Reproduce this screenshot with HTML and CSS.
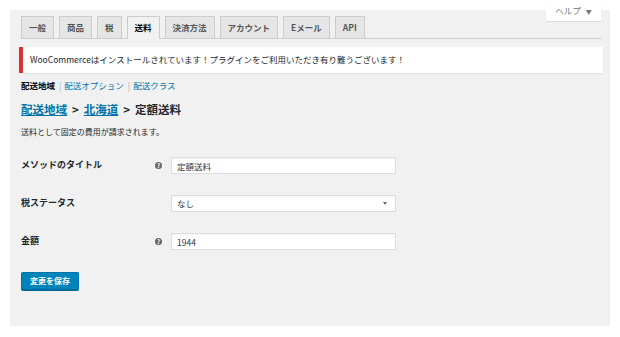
FILE: index.html
```html
<!DOCTYPE html>
<html lang="ja">
<head>
  <meta charset="UTF-8" />
  <meta name="viewport" content="width=device-width, initial-scale=1.0"/>
  <title>WooCommerce 設定 - 送料</title>
  <link rel="stylesheet" href="styles.css">
</head>
<body>

  <!-- ヘルプタブ -->
  <div class="help-tab">ヘルプ <span class="caret">▼</span></div>

  <div class="wrap">

    <!-- タブ -->
    <nav class="tabs">
      <a class="tab" href="#">一般</a>
      <a class="tab" href="#">商品</a>
      <a class="tab" href="#">税</a>
      <a class="tab active" href="#">送料</a>
      <a class="tab" href="#">決済方法</a>
      <a class="tab" href="#">アカウント</a>
      <a class="tab" href="#">Eメール</a>
      <a class="tab" href="#">API</a>
    </nav>

    <div class="notice">
      <p>WooCommerceはインストールされています！プラグインをご利用いただき有り難うございます！</p>
    </div>

    <ul class="subnav">
      <li class="current">配送地域</li>
      <li><a href="#">配送オプション</a></li>
      <li><a href="#">配送クラス</a></li>
    </ul>

    <h2 class="crumbs">
      <a href="#">配送地域</a><span class="sep">&gt;</span><a href="#">北海道</a><span class="sep">&gt;</span>定額送料
    </h2>

    <p class="desc">送料として固定の費用が請求されます。</p>

    <div class="form">
      <div class="row">
        <label class="label">メソッドのタイトル</label>
        <span class="tip">?</span>
        <input class="field" type="text" value="定額送料">
      </div>
      <div class="row">
        <label class="label">税ステータス</label>
        <span class="tip blank"></span>
        <div class="field select">
          <span>なし</span>
          <span class="arrow"></span>
        </div>
      </div>
      <div class="row">
        <label class="label">金額</label>
        <span class="tip">?</span>
        <input class="field" type="text" value="1944">
      </div>
    </div>

    <button class="save">変更を保存</button>

  </div>

</body>
</html>
```

FILE: styles.css
```css
body {
  margin: 0;
  background: #fff;
  color: #23282d;
  font-family: "Noto Sans CJK JP", "Noto Sans", sans-serif;
  font-size: 8.5px;
  line-height: 1.4;
}

a {
  color: #0073aa;
}

.wrap {
  margin: 10px 10px 11px;
  height: 316px;
  box-sizing: border-box;
  background: #f1f1f1;
  padding: 6px 7px 0 9px;
}

/* ヘルプタブ */
.help-tab {
  position: absolute;
  top: 0;
  left: 546px;
  width: 55px;
  height: 21px;
  background: #fff;
  box-shadow: 0 1px 1px rgba(0, 0, 0, 0.08);
  color: #72777c;
  font-size: 8.5px;
  line-height: 21px;
  text-align: center;
}

.help-tab .caret {
  font-size: 6px;
  margin-left: 3px;
}

/* タブ */
.tabs {
  display: flex;
  gap: 5px;
  margin: 0 2px;
  border-bottom: 1px solid #ccc;
  height: 22px;
}

.tab {
  display: block;
  height: 21px;
  padding: 0 7px;
  border: 1px solid #ccc;
  border-bottom: none;
  background: #e5e5e5;
  color: #555;
  font-size: 8.5px;
  font-weight: bold;
  line-height: 21px;
  text-decoration: none;
}

.tab.active {
  background: #f1f1f1;
  color: #000;
  height: 22px;
  margin-bottom: -1px;
}

/* お知らせ */
.notice {
  margin-top: 8px;
  height: 26px;
  box-sizing: border-box;
  background: #fff;
  border-left: 4px solid #dc3232;
  box-shadow: 0 1px 1px rgba(0, 0, 0, 0.06);
  padding-left: 7px;
  display: flex;
  align-items: center;
}

.notice p {
  margin: 0;
}

/* サブナビ */
.subnav {
  list-style: none;
  margin: 6px 0 0 2px;
  padding: 0;
  display: flex;
  height: 12px;
  line-height: 12px;
}

.subnav li + li::before {
  content: "|";
  color: #aaa;
  margin: 0 3px 0 4px;
}

.subnav .current {
  font-weight: bold;
  color: #000;
}

.subnav a {
  text-decoration: none;
}

.crumbs {
  margin: 10px 0 0 2px;
  font-size: 11.5px;
  line-height: 16px;
  height: 16px;
}

.crumbs .sep {
  margin: 0 5px;
}

.desc {
  margin: 9px 0 0 2px;
  font-size: 8px;
  line-height: 12px;
}

/* フォーム */
.form {
  margin: 19px 0 0 2px;
  display: flex;
  flex-direction: column;
  gap: 21px;
}

.row {
  display: flex;
  align-items: center;
  height: 17px;
}

.label {
  width: 134px;
  font-weight: bold;
  font-size: 9px;
}

.tip {
  width: 7px;
  height: 7px;
  border-radius: 50%;
  background: #666;
  color: #fff;
  font-size: 6px;
  font-weight: bold;
  line-height: 7px;
  text-align: center;
  margin-right: 9px;
}

.tip.blank {
  background: none;
}

.field {
  width: 225px;
  height: 17px;
  box-sizing: border-box;
  margin: 0;
  border: 1px solid #ddd;
  background: #fff;
  box-shadow: inset 0 1px 2px rgba(0, 0, 0, 0.05);
  padding: 0 5px;
  font-family: inherit;
  font-size: 8.5px;
  color: #32373c;
}

.select {
  display: flex;
  align-items: center;
  justify-content: space-between;
  padding-right: 8px;
}

.arrow {
  width: 0;
  height: 0;
  border-left: 2.5px solid transparent;
  border-right: 2.5px solid transparent;
  border-top: 3px solid #666;
}

.save {
  margin: 22px 0 0 2px;
  height: 18px;
  padding: 0 8px;
  border: 1px solid #0073aa;
  border-bottom-color: #006799;
  border-radius: 2px;
  background: #0085ba;
  box-shadow: 0 1px 0 #006799;
  color: #fff;
  font-family: inherit;
  font-size: 8px;
  font-weight: bold;
  line-height: 16px;
}
```
